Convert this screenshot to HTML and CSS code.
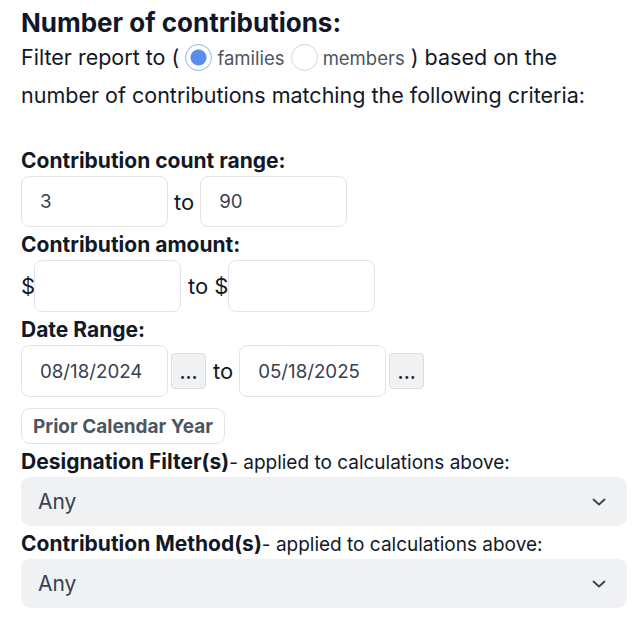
FILE: index.html
```html
<!DOCTYPE html>
<html lang="en">
<head>
<meta charset="utf-8">
<title>Number of contributions</title>
<link rel="stylesheet" href="styles.css">
</head>
<body>
<div class="panel">
  <h2 class="title">Number of contributions:</h2>
  <p class="intro">Filter report to ( <input type="radio" class="radio" name="who" checked><span class="opt">families</span> <input type="radio" class="radio" name="who"><span class="opt">members</span> ) based on the number of contributions matching the following criteria:</p>

  <div class="label first">Contribution count range:</div>
  <div class="row short">
    <input class="field" type="text" value="3">
    <span class="sep">to</span>
    <input class="field" type="text" value="90">
  </div>

  <div class="label">Contribution amount:</div>
  <div class="row">
    <span class="cur">$</span>
    <input class="field" type="text" value="">
    <span class="sep wide">to $</span>
    <input class="field" type="text" value="">
  </div>

  <div class="label">Date Range:</div>
  <div class="row">
    <input class="field" type="text" value="08/18/2024">
    <button class="dots" type="button">...</button>
    <span class="sep date">to</span>
    <input class="field" type="text" value="05/18/2025">
    <button class="dots" type="button">...</button>
  </div>

  <button class="preset" type="button">Prior Calendar Year</button>

  <div class="label"><span>Designation Filter(s)</span><span class="note">- applied to calculations above:</span></div>
  <div class="select">
    <span>Any</span>
    <svg class="chev" width="14" height="8" viewBox="0 0 14 8"><path d="M1.5 1.5 L7 6.5 L12.5 1.5" fill="none" stroke="#374151" stroke-width="1.8" stroke-linecap="round" stroke-linejoin="round"/></svg>
  </div>

  <div class="label"><span>Contribution Method(s)</span><span class="note">- applied to calculations above:</span></div>
  <div class="select">
    <span>Any</span>
    <svg class="chev" width="14" height="8" viewBox="0 0 14 8"><path d="M1.5 1.5 L7 6.5 L12.5 1.5" fill="none" stroke="#374151" stroke-width="1.8" stroke-linecap="round" stroke-linejoin="round"/></svg>
  </div>
</div>
</body>
</html>
```

FILE: styles.css
```css
html, body {
  margin: 0;
  padding: 0;
  background: #ffffff;
}
body {
  font-family: Inter, "Noto Sans", sans-serif;
  color: #111827;
}
.panel {
  padding: 7px 17px 0 21px;
}
.title {
  margin: 0;
  font-size: 26px;
  line-height: 32px;
  font-weight: 700;
  color: #0f172a;
}
.intro {
  margin: 0;
  font-size: 21.5px;
  line-height: 37px;
  color: #111827;
}
.radio {
  appearance: none;
  -webkit-appearance: none;
  width: 27px;
  height: 27px;
  margin: 0 1px 0 0;
  border-radius: 50%;
  border: 1px solid #d4d6db;
  background: #ffffff;
  vertical-align: middle;
  position: relative;
  top: -2px;
}
.radio:checked {
  border: 1.5px solid #8fb1ee;
  background: radial-gradient(circle, #5b8def 0, #5b8def 7.5px, #ffffff 8.5px);
}
.opt {
  font-size: 18.5px;
  color: #4b5563;
  margin-left: 4px;
}
.label {
  height: 33px;
  box-sizing: border-box;
  padding-top: 2px;
  font-size: 21px;
  line-height: 31px;
  font-weight: 700;
  color: #111827;
  white-space: nowrap;
}
.label.first {
  margin-top: 29px;
}
.note {
  font-size: 19px;
  font-weight: 400;
  color: #111827;
}
.row {
  display: flex;
  align-items: center;
  height: 52px;
}
.row.short {
  height: 51px;
}
.row.short .field {
  height: 51px;
}
.field {
  box-sizing: border-box;
  width: 147px;
  height: 52px;
  margin: 0;
  padding: 0 0 0 18px;
  border: 1px solid #e2e4e8;
  border-radius: 8px;
  font-family: Inter, "Noto Sans", sans-serif;
  font-size: 18.7px;
  color: #374151;
  background: #ffffff;
  outline: none;
}
.sep {
  font-size: 22px;
  color: #111827;
  margin: 0 6px;
}
.sep.wide {
  margin: 0 0 0 7px;
}
.sep.date {
  margin: 0 6px 0 7px;
}
.cur {
  font-size: 22px;
  color: #111827;
  width: 13px;
}
.dots {
  box-sizing: border-box;
  width: 35px;
  height: 36px;
  margin: 0 0 0 3px;
  padding: 0 0 6px;
  border: 1px solid #dcdde2;
  border-radius: 4px;
  background: #f0f1f3;
  font-family: Inter, "Noto Sans", sans-serif;
  font-size: 19px;
  font-weight: 600;
  line-height: 1;
  color: #1f2937;
  display: flex;
  align-items: flex-end;
  justify-content: center;
}
.preset {
  display: block;
  box-sizing: border-box;
  height: 36px;
  margin: 11px 0 0;
  padding: 0 11px;
  border: 1px solid #e2e4e8;
  border-radius: 9px;
  background: #ffffff;
  font-family: Inter, "Noto Sans", sans-serif;
  font-size: 19px;
  font-weight: 700;
  color: #4b5563;
}
.select {
  box-sizing: border-box;
  height: 49px;
  display: flex;
  align-items: center;
  justify-content: space-between;
  padding: 0 21px 0 17px;
  background: #f0f1f3;
  border-radius: 9px;
  font-size: 21px;
  color: #374151;
}
.chev {
  display: block;
}
```
